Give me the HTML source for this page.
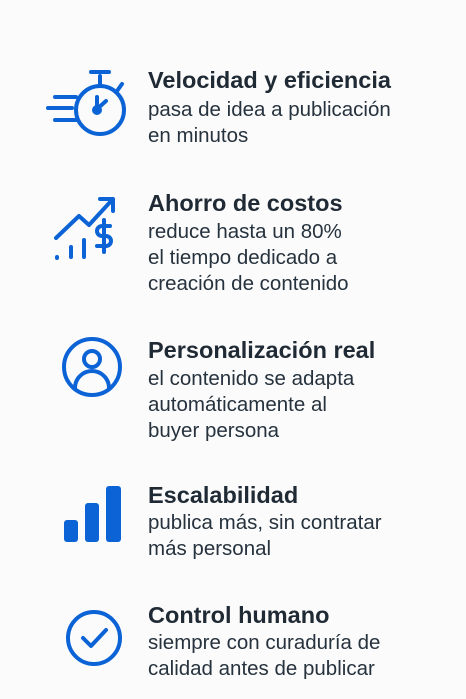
<!DOCTYPE html>
<html><head><meta charset="utf-8"><style>
body{margin:0;width:466px;height:699px;background:#fbfbfb;font-family:"Liberation Sans",sans-serif;color:#1f2a35;position:relative;overflow:hidden}
.t{position:absolute;left:148px;font-weight:bold;font-size:23.5px;line-height:26px;white-space:nowrap}
.b{position:absolute;left:148px;font-size:20.5px;line-height:26px;white-space:nowrap;color:#26323d}
svg{position:absolute;left:0;top:0}
</style></head><body>
<svg width="466" height="699" fill="none" stroke="#0b63d6" stroke-width="4" stroke-linecap="round" stroke-linejoin="round">
<circle cx="100" cy="110" r="24"/>
<line x1="100" y1="86" x2="100" y2="76"/><line x1="91" y1="72" x2="109" y2="72"/>
<line x1="117" y1="91" x2="122" y2="84"/>
<line x1="48" y1="108" x2="72" y2="108"/><line x1="55" y1="97" x2="76" y2="97"/><line x1="55" y1="120" x2="76" y2="120"/>
<line x1="97" y1="97" x2="97" y2="109"/><line x1="97" y1="109" x2="106" y2="101"/><circle cx="97" cy="110" r="3"/>
<polyline points="56,238 79,216 89,225 112,200"/><polyline points="100,199 113,199 113,211"/>
<line x1="57" y1="257" x2="57" y2="258"/><line x1="71" y1="247" x2="71" y2="257"/><line x1="84" y1="240" x2="84" y2="257"/>
<path d="M110 226 h-8 a5 5 0 0 0 0 10 h4 a5 5 0 0 1 0 10 h-9 M104 220 v32"/>
<circle cx="92" cy="367" r="28"/>
<circle cx="92" cy="359" r="8"/>
<path d="M75 388 a17 17 0 0 1 34 0"/>
<circle cx="94" cy="638" r="26"/>
<polyline points="83,638 91,646 106,630"/>
</svg>
<svg width="466" height="699"><g fill="#0b63d6">
<rect x="64" y="520" width="14" height="22" rx="3"/><rect x="85" y="503" width="14" height="39" rx="3"/><rect x="106" y="486" width="15" height="56" rx="3"/></g></svg>
<div class="t" style="top:67px">Velocidad y eficiencia</div>
<div class="b" style="top:97px">pasa de idea a publicación<br>en minutos</div>
<div class="t" style="top:190px">Ahorro de costos</div>
<div class="b" style="top:219px">reduce hasta un 80%<br>el tiempo dedicado a<br>creación de contenido</div>
<div class="t" style="top:337px">Personalización real</div>
<div class="b" style="top:366px">el contenido se adapta<br>automáticamente al<br>buyer persona</div>
<div class="t" style="top:482px">Escalabilidad</div>
<div class="b" style="top:510px">publica más, sin contratar<br>más personal</div>
<div class="t" style="top:602px">Control humano</div>
<div class="b" style="top:630px">siempre con curaduría de<br>calidad antes de publicar</div>
</body></html>
